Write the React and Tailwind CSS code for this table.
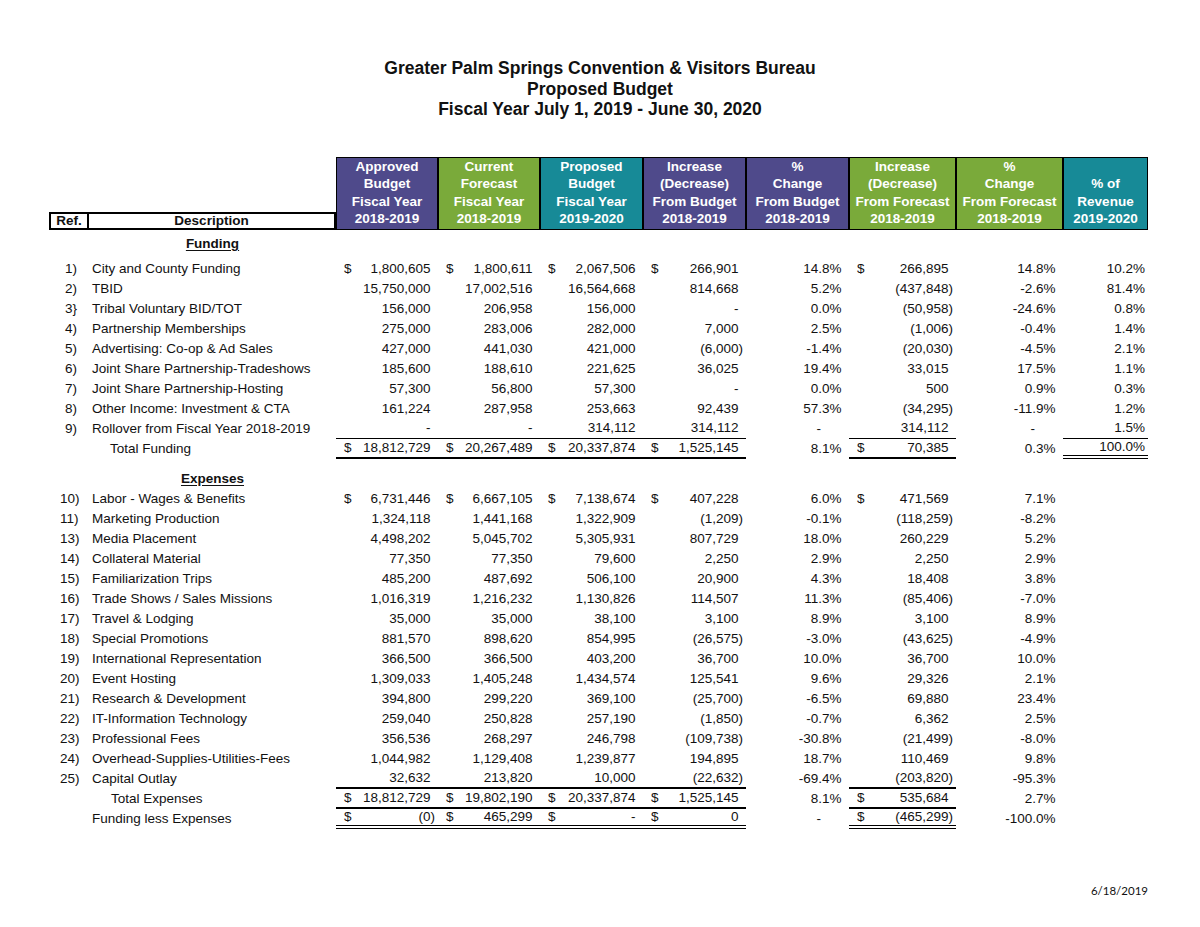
import React from 'react';

const GRID =
  'grid grid-cols-[40px_247px_102px_102px_103px_103px_103px_107px_107px_85px]';

const HEADERS = [
  { lines: ['Approved', 'Budget', 'Fiscal Year', '2018-2019'], bg: 'bg-[#4f4a8b]' },
  { lines: ['Current', 'Forecast', 'Fiscal Year', '2018-2019'], bg: 'bg-[#7aaa3a]' },
  { lines: ['Proposed', 'Budget', 'Fiscal Year', '2019-2020'], bg: 'bg-[#178a97]' },
  { lines: ['Increase', '(Decrease)', 'From Budget', '2018-2019'], bg: 'bg-[#4f4a8b]' },
  { lines: ['%', 'Change', 'From Budget', '2018-2019'], bg: 'bg-[#4f4a8b]' },
  { lines: ['Increase', '(Decrease)', 'From Forecast', '2018-2019'], bg: 'bg-[#7aaa3a]' },
  { lines: ['%', 'Change', 'From Forecast', '2018-2019'], bg: 'bg-[#7aaa3a]' },
  { lines: ['% of', 'Revenue', '2019-2020'], bg: 'bg-[#178a97]' },
];

// money columns: 0-3 and 5, padded percent: 4 and 6, plain percent: 7
const funding = [
  ['1)', 'City and County Funding', ['$1,800,605', '$1,800,611', '$2,067,506', '$266,901', '14.8%', '$266,895', '14.8%', '10.2%']],
  ['2)', 'TBID', ['15,750,000', '17,002,516', '16,564,668', '814,668', '5.2%', '(437,848)', '-2.6%', '81.4%']],
  ['3}', 'Tribal Voluntary BID/TOT', ['156,000', '206,958', '156,000', '-', '0.0%', '(50,958)', '-24.6%', '0.8%']],
  ['4)', 'Partnership Memberships', ['275,000', '283,006', '282,000', '7,000', '2.5%', '(1,006)', '-0.4%', '1.4%']],
  ['5)', 'Advertising: Co-op & Ad Sales', ['427,000', '441,030', '421,000', '(6,000)', '-1.4%', '(20,030)', '-4.5%', '2.1%']],
  ['6)', 'Joint Share Partnership-Tradeshows', ['185,600', '188,610', '221,625', '36,025', '19.4%', '33,015', '17.5%', '1.1%']],
  ['7)', 'Joint Share Partnership-Hosting', ['57,300', '56,800', '57,300', '-', '0.0%', '500', '0.9%', '0.3%']],
  ['8)', 'Other Income: Investment & CTA', ['161,224', '287,958', '253,663', '92,439', '57.3%', '(34,295)', '-11.9%', '1.2%']],
  ['9)', 'Rollover from Fiscal Year 2018-2019', ['-', '-', '314,112', '314,112', '-', '314,112', '-', '1.5%']],
];

const expenses = [
  ['10)', 'Labor - Wages & Benefits', ['$6,731,446', '$6,667,105', '$7,138,674', '$407,228', '6.0%', '$471,569', '7.1%', '']],
  ['11)', 'Marketing Production', ['1,324,118', '1,441,168', '1,322,909', '(1,209)', '-0.1%', '(118,259)', '-8.2%', '']],
  ['13)', 'Media Placement', ['4,498,202', '5,045,702', '5,305,931', '807,729', '18.0%', '260,229', '5.2%', '']],
  ['14)', 'Collateral Material', ['77,350', '77,350', '79,600', '2,250', '2.9%', '2,250', '2.9%', '']],
  ['15)', 'Familiarization Trips', ['485,200', '487,692', '506,100', '20,900', '4.3%', '18,408', '3.8%', '']],
  ['16)', 'Trade Shows / Sales Missions', ['1,016,319', '1,216,232', '1,130,826', '114,507', '11.3%', '(85,406)', '-7.0%', '']],
  ['17)', 'Travel & Lodging', ['35,000', '35,000', '38,100', '3,100', '8.9%', '3,100', '8.9%', '']],
  ['18)', 'Special Promotions', ['881,570', '898,620', '854,995', '(26,575)', '-3.0%', '(43,625)', '-4.9%', '']],
  ['19)', 'International Representation', ['366,500', '366,500', '403,200', '36,700', '10.0%', '36,700', '10.0%', '']],
  ['20)', 'Event Hosting', ['1,309,033', '1,405,248', '1,434,574', '125,541', '9.6%', '29,326', '2.1%', '']],
  ['21)', 'Research & Development', ['394,800', '299,220', '369,100', '(25,700)', '-6.5%', '69,880', '23.4%', '']],
  ['22)', 'IT-Information Technology', ['259,040', '250,828', '257,190', '(1,850)', '-0.7%', '6,362', '2.5%', '']],
  ['23)', 'Professional Fees', ['356,536', '268,297', '246,798', '(109,738)', '-30.8%', '(21,499)', '-8.0%', '']],
  ['24)', 'Overhead-Supplies-Utilities-Fees', ['1,044,982', '1,129,408', '1,239,877', '194,895', '18.7%', '110,469', '9.8%', '']],
  ['25)', 'Capital Outlay', ['32,632', '213,820', '10,000', '(22,632)', '-69.4%', '(203,820)', '-95.3%', '']],
];

const MONEY = [0, 1, 2, 3, 5];

const Cell = ({ v, idx, border }) => {
  if (MONEY.includes(idx)) {
    const dollar = v.startsWith('$');
    const val = dollar ? v.slice(1) : v;
    return (
      <div className={`flex items-center justify-between pl-[8px] pr-[3px] ${border}`}>
        <span>{dollar ? '$' : ''}</span>
        <span>
          {val}
          {val && !val.endsWith(')') && <span className="invisible">)</span>}
        </span>
      </div>
    );
  }
  if (idx === 7) {
    return <div className={`flex items-center justify-end pr-[3px] ${border}`}>{v}</div>;
  }
  if (v === '-') {
    return <div className={`flex items-center justify-end pr-[28px] ${border}`}>-</div>;
  }
  return (
    <div className={`flex items-center justify-end pr-[3px] ${border}`}>
      {v}
      <span className="invisible">)</span>
    </div>
  );
};

const Row = ({ refNo, desc, values, descPad = 'pl-[3px]', borders = {} }) => (
  <div className={`${GRID} h-[20px]`}>
    <div className={`flex items-center ${refNo && refNo.length > 2 ? 'pl-[11px]' : 'pl-[16px]'}`}>
      {refNo}
    </div>
    <div className={`flex items-center ${descPad}`}>{desc}</div>
    {values.map((v, i) => (
      <Cell key={i} v={v} idx={i} border={borders[i] || ''} />
    ))}
  </div>
);

const Section = ({ title, className }) => (
  <div className={`${GRID} h-[20px] ${className}`}>
    <div />
    <div className="flex items-center justify-center font-bold underline underline-offset-2">
      {title}
    </div>
  </div>
);

const thin = 'border-b border-black';
const thick = 'border-b-2 border-black';
const dbl = 'border-b-4 border-double border-black';

export default function App() {
  return (
    <div className="min-h-[927px] bg-white text-[#111] font-['Liberation_Sans',Arial,sans-serif] text-[13.5px] leading-none">
      <div className="pt-[58px] text-center font-bold text-[17.5px] leading-[20.5px]">
        <div>Greater Palm Springs Convention &amp; Visitors Bureau</div>
        <div>Proposed Budget</div>
        <div>Fiscal Year July 1, 2019 - June 30, 2020</div>
      </div>

      <div className="ml-[49px] mt-[37px] w-[1099px]">
        <div className={`${GRID} h-[72px]`}>
          <div className="self-end h-[18px] border-2 border-black flex items-center justify-center font-bold">
            Ref.
          </div>
          <div className="self-end h-[18px] border-y-2 border-r-2 border-black flex items-center justify-center font-bold">
            Description
          </div>
          {HEADERS.map((h, i) => (
            <div
              key={i}
              className={`${h.bg} border border-black text-white font-bold text-center leading-[17.5px] flex flex-col justify-end pb-[1px]`}
            >
              {h.lines.map((l) => (
                <div key={l}>{l}</div>
              ))}
            </div>
          ))}
        </div>

        <Section title="Funding" className="mt-[5px] mb-[5px]" />
        {funding.map(([r, d, v], i) => (
          <Row
            key={r}
            refNo={r}
            desc={d}
            values={v}
            borders={i === 8 ? { 0: thin, 1: thin, 2: thin, 3: thin, 5: thin, 7: thin } : {}}
          />
        ))}
        <Row
          desc="Total Funding"
          descPad="pl-[21px]"
          values={['$18,812,729', '$20,267,489', '$20,337,874', '$1,525,145', '8.1%', '$70,385', '0.3%', '100.0%']}
          borders={{ 0: thick, 1: thick, 2: thick, 3: thick, 5: thick, 7: dbl }}
        />

        <Section title="Expenses" className="mt-[10px]" />
        {expenses.map(([r, d, v], i) => (
          <Row
            key={r}
            refNo={r}
            desc={d}
            values={v}
            borders={i === 14 ? { 0: thick, 1: thick, 2: thick, 3: thick, 5: thick } : {}}
          />
        ))}
        <Row
          desc="Total Expenses"
          descPad="pl-[22px]"
          values={['$18,812,729', '$19,802,190', '$20,337,874', '$1,525,145', '8.1%', '$535,684', '2.7%', '']}
          borders={{ 0: thick, 1: thick, 2: thick, 3: thick, 5: thick }}
        />
        <Row
          desc="Funding less Expenses"
          values={['$(0)', '$465,299', '$-', '$0', '-', '$(465,299)', '-100.0%', '']}
          borders={{ 0: dbl, 1: dbl, 2: dbl, 3: dbl, 5: dbl }}
        />
      </div>

      <div className="mt-[54px] pr-[52px] text-right font-['Lato',sans-serif] text-[11.5px] leading-[16px]">
        6/18/2019
      </div>
    </div>
  );
}
